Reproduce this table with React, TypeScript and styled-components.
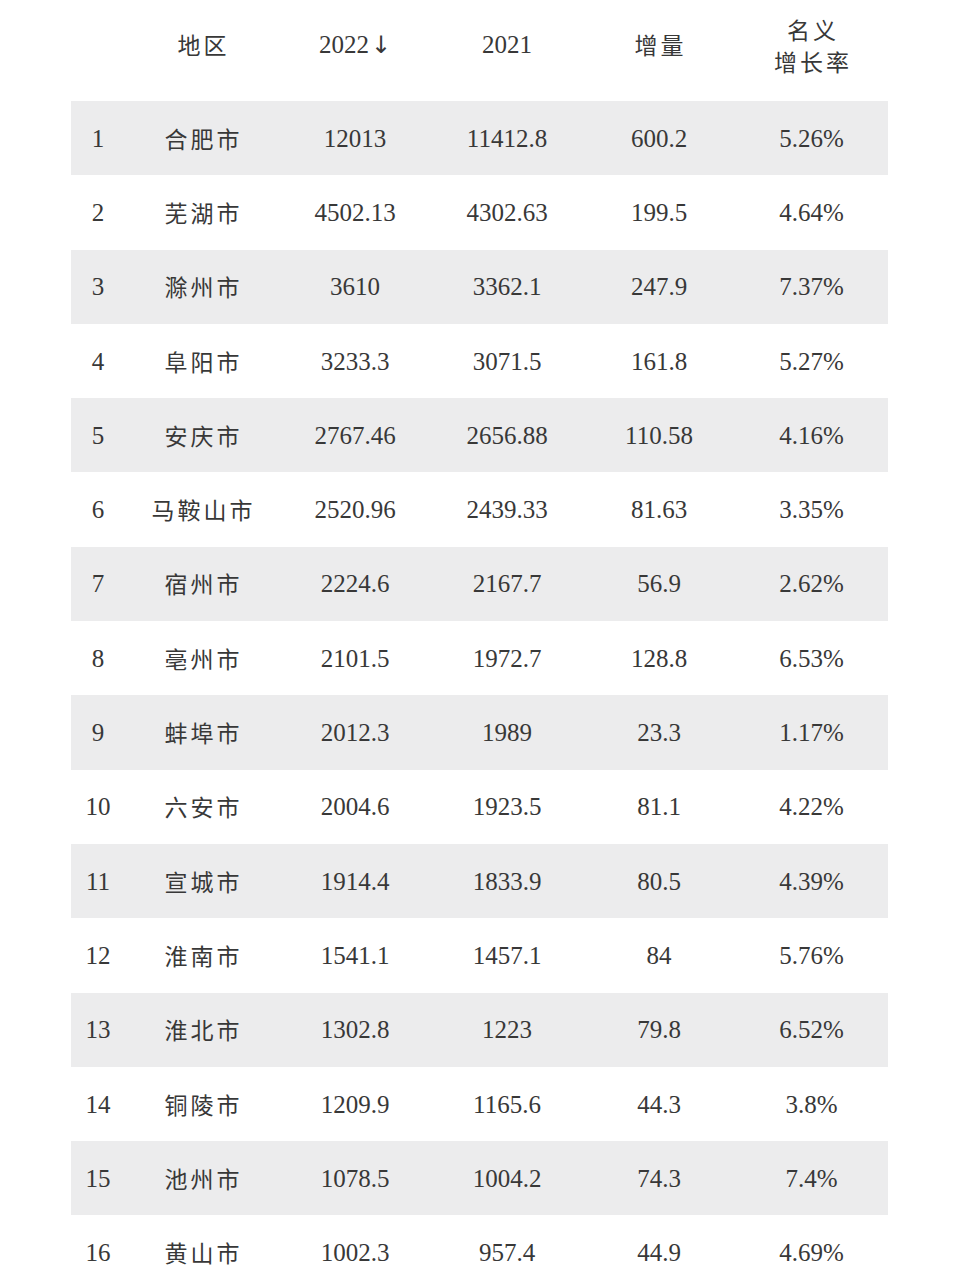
import React from "react";
import styled, { createGlobalStyle } from "styled-components";

const GlobalStyle = createGlobalStyle`
  html, body { margin: 0; padding: 0; background: #ffffff; }
  body { font-family: "Liberation Serif", "Noto Sans CJK SC", serif; color: #3a3a3a; }
`;

const Page = styled.div`
  width: 960px;
  height: 1280px;
  overflow: hidden;
  background: #ffffff;
  padding-left: 71px;
  box-sizing: border-box;
`;

const Table = styled.div`
  width: 817px;
  display: flex;
  flex-direction: column;
`;

const cols = "54px 154px 152px 152px 152px 153px";

const HeaderRow = styled.div`
  display: grid;
  grid-template-columns: ${cols};
  height: 101px;
  box-sizing: border-box;
  padding-bottom: 12px;
  align-items: center;
`;

const Row = styled.div<{ $striped: boolean }>`
  display: grid;
  grid-template-columns: ${cols};
  height: 74.3px;
  align-items: center;
  background: ${(p) => (p.$striped ? "#ececed" : "#ffffff")};
`;

const Cell = styled.div<{ $cjk?: boolean }>`
  display: flex;
  flex-direction: column;
  align-items: center;
  justify-content: center;
  text-align: center;
  white-space: nowrap;
  font-family: ${(p) =>
    p.$cjk
      ? `"Noto Sans CJK SC", "Noto Sans", sans-serif`
      : `"Liberation Serif", "Noto Sans CJK SC", serif`};
  font-size: ${(p) => (p.$cjk ? "23px" : "25px")};
  letter-spacing: ${(p) => (p.$cjk ? "3px" : "0")};
  padding-left: ${(p) => (p.$cjk ? "3px" : "0")};
  color: #383838;
  line-height: 1;
`;

const HeadLine = styled.span`
  display: block;
  line-height: 32px;
`;

const Arrow = styled.span`
  font-family: "DejaVu Sans", sans-serif;
  font-size: 24px;
  margin-left: 2px;
`;

type Item = [string, string, string, string, string];

const data: Item[] = [
  ["合肥市", "12013", "11412.8", "600.2", "5.26%"],
  ["芜湖市", "4502.13", "4302.63", "199.5", "4.64%"],
  ["滁州市", "3610", "3362.1", "247.9", "7.37%"],
  ["阜阳市", "3233.3", "3071.5", "161.8", "5.27%"],
  ["安庆市", "2767.46", "2656.88", "110.58", "4.16%"],
  ["马鞍山市", "2520.96", "2439.33", "81.63", "3.35%"],
  ["宿州市", "2224.6", "2167.7", "56.9", "2.62%"],
  ["亳州市", "2101.5", "1972.7", "128.8", "6.53%"],
  ["蚌埠市", "2012.3", "1989", "23.3", "1.17%"],
  ["六安市", "2004.6", "1923.5", "81.1", "4.22%"],
  ["宣城市", "1914.4", "1833.9", "80.5", "4.39%"],
  ["淮南市", "1541.1", "1457.1", "84", "5.76%"],
  ["淮北市", "1302.8", "1223", "79.8", "6.52%"],
  ["铜陵市", "1209.9", "1165.6", "44.3", "3.8%"],
  ["池州市", "1078.5", "1004.2", "74.3", "7.4%"],
  ["黄山市", "1002.3", "957.4", "44.9", "4.69%"],
];

export default function App() {
  return (
    <>
      <GlobalStyle />
      <Page>
        <Table>
          <HeaderRow>
            <Cell />
            <Cell $cjk>地区</Cell>
            <Cell>
              <span>
                2022<Arrow>↓</Arrow>
              </span>
            </Cell>
            <Cell>2021</Cell>
            <Cell $cjk>增量</Cell>
            <Cell $cjk>
              <HeadLine>名义</HeadLine>
              <HeadLine>增长率</HeadLine>
            </Cell>
          </HeaderRow>
          {data.map((d, i) => (
            <Row key={d[0]} $striped={i % 2 === 0}>
              <Cell>{i + 1}</Cell>
              <Cell $cjk>{d[0]}</Cell>
              <Cell>{d[1]}</Cell>
              <Cell>{d[2]}</Cell>
              <Cell>{d[3]}</Cell>
              <Cell>{d[4]}</Cell>
            </Row>
          ))}
        </Table>
      </Page>
    </>
  );
}
